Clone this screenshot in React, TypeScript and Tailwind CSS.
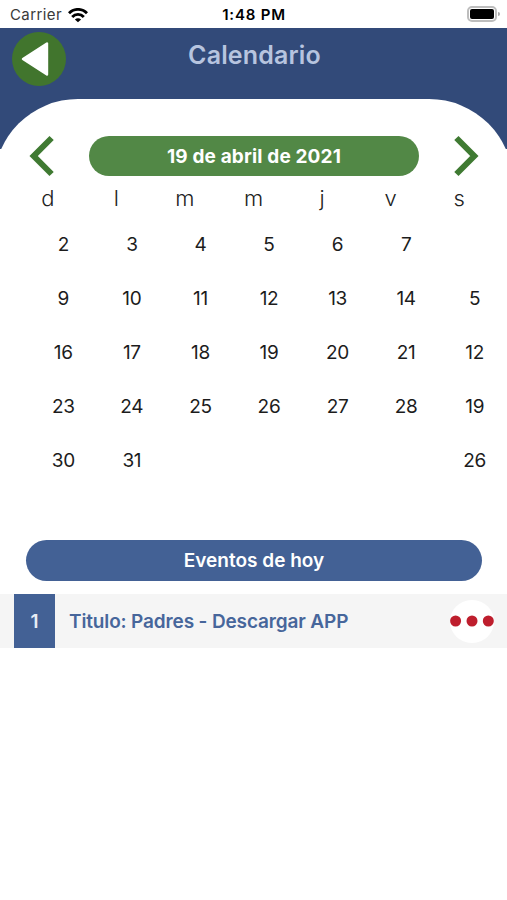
const DAYS = ['d', 'l', 'm', 'm', 'j', 'v', 's'];

const WEEKS = [
  ['2', '3', '4', '5', '6', '7', ''],
  ['9', '10', '11', '12', '13', '14', '5'],
  ['16', '17', '18', '19', '20', '21', '12'],
  ['23', '24', '25', '26', '27', '28', '19'],
  ['30', '31', '', '', '', '', '26'],
];

function StatusBar() {
  return (
    <div className="grid h-7 grid-cols-3 items-center pl-[10px] pr-[7px] text-[15px]">
      <div className="flex items-center gap-[6px] pt-[2px] text-[#3a3a3a]">
        <span className="tracking-[0.4px]">Carrier</span>
        <svg width="20" height="15" viewBox="0 0 20 15" fill="none" stroke="#000" strokeWidth="2.9">
          <path d="M1 5.3C6 .1 14 .1 19 5.3" />
          <path d="M4.2 8.9C7.4 5.5 12.6 5.5 15.8 8.9" />
          <path d="M10 14.3 6.9 11.4C8.6 9.8 11.4 9.8 13.1 11.4Z" fill="#000" stroke="none" />
        </svg>
      </div>
      <div className="-ml-[2px] pt-[2px] text-center font-semibold tracking-[0.8px] text-black">1:48 PM</div>
      <div className="flex items-center justify-end gap-px">
        <div className="h-4 w-[30px] rounded-[5px] border-2 border-[#bdbdbd] p-px">
          <div className="h-full w-full rounded-[2px] bg-black" />
        </div>
        <div className="h-1 w-[2px] rounded-r bg-[#aaa]" />
      </div>
    </div>
  );
}

function Header() {
  return (
    <header className="h-[121px] overflow-hidden bg-[#324a79]">
      <div className="grid h-[71px] grid-cols-[66px_1fr_66px] items-start">
        <button className="ml-3 mt-[4px] h-[54px] w-[54px] rounded-full bg-[#41752d]" aria-label="Volver">
          <svg width="54" height="54" viewBox="0 0 54 54">
            <path d="M11 27 35 11.5V42.5Z" fill="#fff" stroke="#fff" strokeWidth="2.4" strokeLinejoin="round" />
          </svg>
        </button>
        <h1 className="pl-[2px] pt-[9px] text-center text-[25px] font-semibold leading-9 tracking-[0.15px] text-[#b7c4df]">
          Calendario
        </h1>
      </div>
      <div className="-mx-[6px] h-[110px] rounded-t-[84px] bg-white" />
    </header>
  );
}

function Chevron({ flip }: { flip?: boolean }) {
  return (
    <svg width="25" height="42" viewBox="0 0 25 42" fill="none" stroke="#3f7a32" strokeWidth="6" className={flip ? 'rotate-180' : ''}>
      <path d="M22.6 3 4.7 21 22.6 39" />
    </svg>
  );
}

export default function App() {
  return (
    <div className="h-[900px] w-[507px] overflow-hidden bg-white font-['Inter','Liberation_Sans',sans-serif]">
      <StatusBar />
      <Header />
      <div className="-mt-[14px] flex h-[42px] items-start justify-between pl-[29px] pr-7">
        <Chevron />
        <div className="mt-px flex h-10 w-[330px] items-center justify-center rounded-full bg-[#528846] pt-[2px] text-[19px] font-bold tracking-[0.15px] text-white">
          19 de abril de 2021
        </div>
        <Chevron flip />
      </div>
      <div className="mt-[5px] grid h-[35px] grid-cols-7 px-[13.5px] text-center text-[22px] font-light leading-[32px] text-[#222]">
        {DAYS.map((d, i) => (
          <span key={i}>{d}</span>
        ))}
      </div>
      <div className="-mr-[2px] ml-[29px] grid auto-rows-[54px] grid-cols-7 pt-px text-center text-[19px] leading-[54px] tracking-[-0.3px] text-[#1c1c1c]">
        {WEEKS.flat().map((n, i) => (
          <span key={i}>{n}</span>
        ))}
      </div>
      <div className="ml-[26px] mt-[52px] flex h-[41px] w-[456px] items-center justify-center rounded-full bg-[#436195] pt-[2px] text-[19px] font-semibold text-white">
        Eventos de hoy
      </div>
      <div className="mt-[13px] flex h-[54px] items-center bg-[#f5f5f5] pl-[14px] pr-[13px]">
        <div className="flex h-full w-[41px] items-center justify-center bg-[#436195] pt-[2px] text-[19px] font-semibold text-[#e8edf6]">1</div>
        <div className="ml-[14px] flex-1 pt-[2px] text-[19px] font-semibold tracking-[-0.14px] text-[#47669b]">
          Titulo: Padres - Descargar APP
        </div>
        <button className="flex h-[43px] w-[44px] items-center justify-center rounded-full bg-white" aria-label="Opciones">
          <svg width="44" height="12" viewBox="0 0 44 12" fill="#be1e2d">
            <circle cx="5.6" cy="6" r="5.5" />
            <circle cx="22" cy="6" r="5.5" />
            <circle cx="38.3" cy="6" r="5.5" />
          </svg>
        </button>
      </div>
    </div>
  );
}
